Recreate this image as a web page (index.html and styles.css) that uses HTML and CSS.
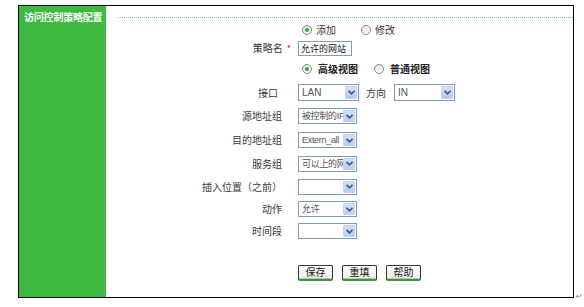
FILE: index.html
```html
<!doctype html>
<html lang="zh-CN">

<head>
    <meta charset="UTF-8" />
    <title>访问控制策略配置</title>
    <link rel="stylesheet" href="styles.css">
</head>

<body>
    <div class="page">
        <div class="frame">
            <div class="side">
                <h1>访问控制策略配置</h1>
            </div>

            <div class="main">
                <div class="rule"></div>

                <form class="policy-form">
                    <div class="row row-radio1">
                        <span></span>
                        <div class="field">
                            <span class="radio checked"></span><span class="opt">添加</span>
                            <span class="radio"></span><span class="opt">修改</span>
                        </div>
                    </div>

                    <div class="row row-name">
                        <label>策略名<span class="req">*</span></label>
                        <div class="field">
                            <span class="text-input">允许的网站</span>
                        </div>
                    </div>

                    <div class="row row-radio2">
                        <span></span>
                        <div class="field bold">
                            <span class="radio checked"></span><span class="opt">高级视图</span>
                            <span class="radio"></span><span class="opt">普通视图</span>
                        </div>
                    </div>

                    <div class="row row-if">
                        <label class="pad">接口</label>
                        <div class="field">
                            <div class="sel wide"><span class="val">LAN</span><span class="arrow"><svg width="7" height="5" viewBox="0 0 7 5"><path d="M0.5 0.8 L3.5 3.8 L6.5 0.8" fill="none" stroke="#3b5a8c" stroke-width="1.6"/></svg></span></div>
                            <span class="dir">方向</span>
                            <div class="sel wide"><span class="val">IN</span><span class="arrow"><svg width="7" height="5" viewBox="0 0 7 5"><path d="M0.5 0.8 L3.5 3.8 L6.5 0.8" fill="none" stroke="#3b5a8c" stroke-width="1.6"/></svg></span></div>
                        </div>
                    </div>

                    <div class="row row-src">
                        <label>源地址组</label>
                        <div class="field">
                            <div class="sel"><span class="val">被控制的IP</span><span class="arrow"><svg width="7" height="5" viewBox="0 0 7 5"><path d="M0.5 0.8 L3.5 3.8 L6.5 0.8" fill="none" stroke="#3b5a8c" stroke-width="1.6"/></svg></span></div>
                        </div>
                    </div>

                    <div class="row row-dst">
                        <label>目的地址组</label>
                        <div class="field">
                            <div class="sel"><span class="val">Extern_all</span><span class="arrow"><svg width="7" height="5" viewBox="0 0 7 5"><path d="M0.5 0.8 L3.5 3.8 L6.5 0.8" fill="none" stroke="#3b5a8c" stroke-width="1.6"/></svg></span></div>
                        </div>
                    </div>

                    <div class="row row-svc">
                        <label>服务组</label>
                        <div class="field">
                            <div class="sel"><span class="val">可以上的网</span><span class="arrow"><svg width="7" height="5" viewBox="0 0 7 5"><path d="M0.5 0.8 L3.5 3.8 L6.5 0.8" fill="none" stroke="#3b5a8c" stroke-width="1.6"/></svg></span></div>
                        </div>
                    </div>

                    <div class="row row-pos">
                        <label>插入位置（之前）</label>
                        <div class="field">
                            <div class="sel"><span class="val"></span><span class="arrow"><svg width="7" height="5" viewBox="0 0 7 5"><path d="M0.5 0.8 L3.5 3.8 L6.5 0.8" fill="none" stroke="#3b5a8c" stroke-width="1.6"/></svg></span></div>
                        </div>
                    </div>

                    <div class="row row-act">
                        <label>动作</label>
                        <div class="field">
                            <div class="sel"><span class="val">允许</span><span class="arrow"><svg width="7" height="5" viewBox="0 0 7 5"><path d="M0.5 0.8 L3.5 3.8 L6.5 0.8" fill="none" stroke="#3b5a8c" stroke-width="1.6"/></svg></span></div>
                        </div>
                    </div>

                    <div class="row row-time">
                        <label>时间段</label>
                        <div class="field">
                            <div class="sel"><span class="val"></span><span class="arrow"><svg width="7" height="5" viewBox="0 0 7 5"><path d="M0.5 0.8 L3.5 3.8 L6.5 0.8" fill="none" stroke="#3b5a8c" stroke-width="1.6"/></svg></span></div>
                        </div>
                    </div>

                    <div class="row row-btns">
                        <span></span>
                        <div class="field buttons">
                            <button type="button" class="btn">保存</button>
                            <button type="button" class="btn">重填</button>
                            <button type="button" class="btn">帮助</button>
                        </div>
                    </div>
                </form>
            </div>
        </div>
        <span class="para-mark">↵</span>
    </div>
</body>

</html>
```

FILE: styles.css
```css
* {
    box-sizing: border-box;
    margin: 0;
    padding: 0;
}

body {
    background-color: #fff;
    font-family: "Noto Sans CJK SC", "DejaVu Sans", sans-serif;
    font-size: 10px;
    color: #3a3a3a;
}

.page {
    display: flex;
    align-items: flex-end;
    padding: 5px 0 0 18px;
}

.frame {
    display: flex;
    width: 556px;
    height: 293px;
    border: 1px solid #000;
}

.para-mark {
    font-family: "DejaVu Sans", sans-serif;
    font-size: 8px;
    color: #888;
    margin: 0 0 -3px 2px;
}

.side {
    width: 87px;
    background-color: #3db93f;
    padding: 4px 0 0 5px;
}

.side h1 {
    font-size: 10px;
    font-weight: bold;
    color: #fff;
    line-height: 14px;
    white-space: nowrap;
    letter-spacing: -0.2px;
}

.main {
    flex: 1;
}

.rule {
    margin: 11px 0 0 12px;
    border-top: 1px dotted #93c493;
}

.policy-form {
    display: flex;
    flex-direction: column;
    padding-top: 3px;
}

.row {
    display: grid;
    grid-template-columns: 176px 1fr;
    column-gap: 16px;
    align-items: center;
}

.row label {
    text-align: right;
    white-space: nowrap;
    line-height: 14px;
}

.row label.pad {
    padding-right: 4px;
}

.req {
    color: #e02020;
    font-size: 9px;
    margin: 0 -9px 0 4px;
}

.row-radio1 { height: 18px; }
.row-name { height: 18px; }
.row-radio2 { height: 24px; }
.row-if { height: 23px; }
.row-src { height: 24px; }
.row-dst { height: 24px; }
.row-svc { height: 23px; }
.row-pos { height: 23px; }
.row-act { height: 22px; }
.row-time { height: 22px; }
.row-btns { height: 17px; margin-top: 22px; }

.field {
    display: flex;
    align-items: center;
    line-height: 14px;
}

.field.bold {
    font-weight: bold;
    color: #222;
}

.radio {
    width: 10px;
    height: 10px;
    border: 1px solid #7d8a99;
    border-radius: 50%;
    background: linear-gradient(135deg, #e6e6e6, #fff);
    display: flex;
    align-items: center;
    justify-content: center;
    margin-left: 4px;
}

.radio.checked::after {
    content: "";
    width: 4px;
    height: 4px;
    border-radius: 50%;
    background-color: #31a531;
}

.opt {
    margin-left: 4px;
    margin-right: 21px;
}

.field.bold .opt {
    margin-left: 6px;
    margin-right: 12px;
}

.text-input {
    width: 54px;
    height: 15px;
    border: 1px solid #7f9db9;
    padding-left: 2px;
    font-size: 9px;
    line-height: 13px;
    white-space: nowrap;
    overflow: hidden;
    color: #222;
}

.sel {
    display: flex;
    width: 59px;
    height: 16px;
    border: 1px solid #7f9db9;
    background-color: #fff;
    padding: 1px;
}

.sel.wide {
    width: 61px;
    height: 17px;
}

.val {
    flex: 1;
    min-width: 0;
    padding-left: 2px;
    font-family: "Liberation Sans", "Noto Sans CJK SC", sans-serif;
    font-size: 9px;
    letter-spacing: -0.3px;
    line-height: 12px;
    color: #555;
    white-space: nowrap;
    overflow: hidden;
}

.sel.wide .val {
    font-size: 10px;
    letter-spacing: 0;
    line-height: 13px;
}

.arrow {
    width: 12px;
    flex-shrink: 0;
    display: flex;
    align-items: center;
    justify-content: center;
    background: linear-gradient(#d3e0fb, #b7cbf4);
    border: 1px solid #c3d3f5;
    border-radius: 1px;
}

.dir {
    margin: 0 8px 0 7px;
}

.buttons {
    gap: 9px;
}

.btn {
    font-family: inherit;
    font-size: 10px;
    line-height: 12px;
    width: 35px;
    height: 16px;
    background: linear-gradient(#fff, #ecece6);
    border: 1px solid #2d3a2d;
    border-bottom: 2px solid #4a8a4a;
    border-radius: 2px;
    color: #222;
    box-shadow: inset 0 -1px 0 #9fd49f;
}
```
